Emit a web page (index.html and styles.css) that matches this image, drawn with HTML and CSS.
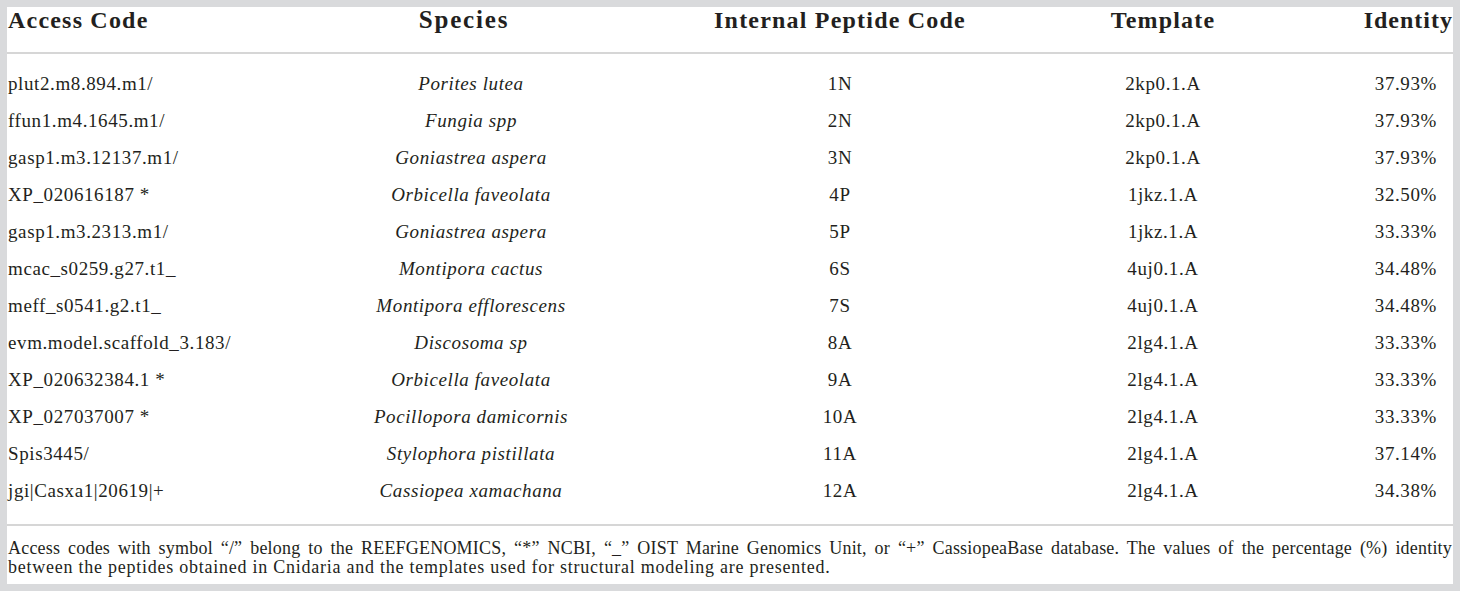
FILE: index.html
```html
<!DOCTYPE html>
<html lang="en">
<head>
    <meta charset="UTF-8">
    <title>Peptide templates and identity</title>
    <link rel="stylesheet" href="styles.css">
</head>
<body>
    <div class="sheet">
        <div class="table">
            <div class="row head">
                <div class="cell c1">Access Code</div>
                <div class="cell c2">Species</div>
                <div class="cell c3">Internal Peptide Code</div>
                <div class="cell c4">Template</div>
                <div class="cell c5">Identity</div>
            </div>

            <div class="body">
                <div class="row"><div class="cell c1">plut2.m8.894.m1/</div><div class="cell c2"><i>Porites lutea</i></div><div class="cell c3">1N</div><div class="cell c4">2kp0.1.A</div><div class="cell c5">37.93%</div></div>
                <div class="row"><div class="cell c1">ffun1.m4.1645.m1/</div><div class="cell c2"><i>Fungia spp</i></div><div class="cell c3">2N</div><div class="cell c4">2kp0.1.A</div><div class="cell c5">37.93%</div></div>
                <div class="row"><div class="cell c1">gasp1.m3.12137.m1/</div><div class="cell c2"><i>Goniastrea aspera</i></div><div class="cell c3">3N</div><div class="cell c4">2kp0.1.A</div><div class="cell c5">37.93%</div></div>
                <div class="row"><div class="cell c1">XP_020616187 *</div><div class="cell c2"><i>Orbicella faveolata</i></div><div class="cell c3">4P</div><div class="cell c4">1jkz.1.A</div><div class="cell c5">32.50%</div></div>
                <div class="row"><div class="cell c1">gasp1.m3.2313.m1/</div><div class="cell c2"><i>Goniastrea aspera</i></div><div class="cell c3">5P</div><div class="cell c4">1jkz.1.A</div><div class="cell c5">33.33%</div></div>
                <div class="row"><div class="cell c1">mcac_s0259.g27.t1_</div><div class="cell c2"><i>Montipora cactus</i></div><div class="cell c3">6S</div><div class="cell c4">4uj0.1.A</div><div class="cell c5">34.48%</div></div>
                <div class="row"><div class="cell c1">meff_s0541.g2.t1_</div><div class="cell c2"><i>Montipora efflorescens</i></div><div class="cell c3">7S</div><div class="cell c4">4uj0.1.A</div><div class="cell c5">34.48%</div></div>
                <div class="row"><div class="cell c1">evm.model.scaffold_3.183/</div><div class="cell c2"><i>Discosoma sp</i></div><div class="cell c3">8A</div><div class="cell c4">2lg4.1.A</div><div class="cell c5">33.33%</div></div>
                <div class="row"><div class="cell c1">XP_020632384.1 *</div><div class="cell c2"><i>Orbicella faveolata</i></div><div class="cell c3">9A</div><div class="cell c4">2lg4.1.A</div><div class="cell c5">33.33%</div></div>
                <div class="row"><div class="cell c1">XP_027037007 *</div><div class="cell c2"><i>Pocillopora damicornis</i></div><div class="cell c3">10A</div><div class="cell c4">2lg4.1.A</div><div class="cell c5">33.33%</div></div>
                <div class="row"><div class="cell c1">Spis3445/</div><div class="cell c2"><i>Stylophora pistillata</i></div><div class="cell c3">11A</div><div class="cell c4">2lg4.1.A</div><div class="cell c5">37.14%</div></div>
                <div class="row"><div class="cell c1">jgi|Casxa1|20619|+</div><div class="cell c2"><i>Cassiopea xamachana</i></div><div class="cell c3">12A</div><div class="cell c4">2lg4.1.A</div><div class="cell c5">34.38%</div></div>
            </div>
        </div>

        <div class="footnote">
            <div class="full">Access codes with symbol “/” belong to the REEFGENOMICS, “*” NCBI, “_” OIST Marine Genomics Unit, or “+” CassiopeaBase database. The values of the percentage (%) identity</div>
            <div>between the peptides obtained in Cnidaria and the templates used for structural modeling are presented.</div>
        </div>
    </div>
</body>
</html>
```

FILE: styles.css
```css
body {
    margin: 0;
    padding: 7px;
    background: #d9dadc;
    font-family: 'Liberation Serif', 'Times New Roman', serif;
    color: #231f20;
}

.sheet {
    width: 1446px;
    height: 577px;
    background: #ffffff;
    box-sizing: border-box;
}

.row {
    display: grid;
    grid-template-columns: 290px 334px 418px 228px 176px;
}

.cell {
    white-space: nowrap;
}

.c1 {
    text-align: left;
    padding-left: 1px;
}

.c2,
.c3,
.c4 {
    text-align: center;
}

.c5 {
    text-align: right;
    padding-right: 16px;
}

.head {
    font-size: 24px;
    font-weight: bold;
    letter-spacing: 1.2px;
    line-height: 26px;
    height: 45px;
    border-bottom: 2px solid #d6d6d6;
}

.head .c2 {
    font-size: 25px;
    letter-spacing: 1.8px;
}

.head .c5 {
    padding-right: 0;
    letter-spacing: 1px;
}

.head .c1 {
    letter-spacing: 1.2px;
}

.body {
    padding: 11px 0 15px;
    border-bottom: 2px solid #d6d6d6;
}

.body .row {
    font-size: 19px;
    letter-spacing: 0.6px;
    line-height: 37px;
}

.body .c2 {
    padding-left: 14px;
}

.footnote {
    padding: 13px 1px 0;
    font-size: 18px;
    line-height: 19px;
    letter-spacing: 0.75px;
}

.full {
    letter-spacing: 0.2px;
    text-align: justify;
    text-align-last: justify;
}
```
